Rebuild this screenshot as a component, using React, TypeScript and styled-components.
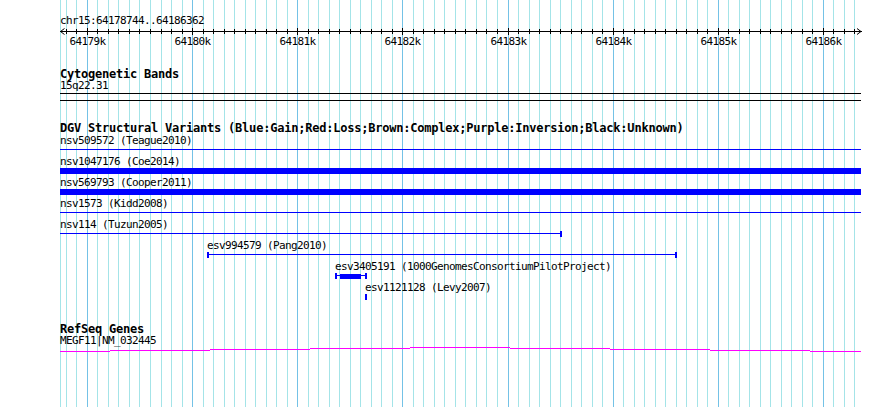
import * as React from 'react';
import styled, { createGlobalStyle } from 'styled-components';

const START = 64178744;
const END = 64186362;
const LEFT = 60;
const WIDTH = 801;

const toX = (bp: number) => ((bp - START) * WIDTH) / (END - START);

const GlobalStyle = createGlobalStyle`
  html, body {
    margin: 0;
    padding: 0;
    background: #ffffff;
  }
  body {
    font-family: "DejaVu Sans Mono", "Liberation Mono", monospace;
  }
`;

const Page = styled.div`
  position: relative;
  width: 890px;
  height: 407px;
  overflow: hidden;
  background: #ffffff;
`;

const GridLayer = styled.svg`
  position: absolute;
  left: 0;
  top: 0;
  width: 890px;
  height: 407px;
`;

const Panel = styled.div`
  position: relative;
  display: flex;
  flex-direction: column;
  width: ${WIDTH}px;
  padding-left: ${LEFT}px;
`;

const Text = styled.div<{ $top?: number }>`
  height: 12px;
  line-height: 12px;
  margin-top: ${(p) => p.$top ?? 0}px;
  font-size: 11px;
  letter-spacing: -0.62px;
  color: #000;
  white-space: pre;
`;

const TrackTitle = styled.div<{ $top: number }>`
  height: 12px;
  line-height: 12px;
  margin-top: ${(p) => p.$top}px;
  font-size: 12px;
  font-weight: bold;
  letter-spacing: -0.22px;
  color: #000;
  white-space: pre;
`;

const RulerSvg = styled.svg`
  display: block;
  width: ${WIDTH + 1}px;
  height: 9px;
  margin-left: -0px;
  overflow: visible;
`;

const TickLabels = styled.div`
  position: relative;
  height: 12px;
`;

const TickLabel = styled.span`
  position: absolute;
  top: 0;
  transform: translateX(-50%);
  font-size: 11px;
  line-height: 12px;
  letter-spacing: -0.62px;
  white-space: pre;
`;

const BandBox = styled.div`
  height: 6px;
  margin-top: 1px;
  border-top: 1px solid #000;
  border-bottom: 1px solid #000;
`;

const VariantList = styled.div`
  display: flex;
  flex-direction: column;
  gap: 3px;
  margin-top: 1px;
`;

const VariantRow = styled.div`
  display: flex;
  flex-direction: column;
`;

const VariantLabel = styled.div`
  height: 12px;
  line-height: 12px;
  font-size: 11px;
  letter-spacing: -0.62px;
  white-space: pre;
`;

const Glyph = styled.div`
  position: relative;
  height: 6px;
`;

const Connector = styled.div`
  position: absolute;
  top: 2px;
  height: 1px;
  background: #0000ff;
`;

const Block = styled.div<{ $h?: number }>`
  position: absolute;
  top: ${(p) => (6 - (p.$h ?? 6)) / 2}px;
  height: ${(p) => p.$h ?? 6}px;
  background: #0000ff;
`;

const Cap = styled.div`
  position: absolute;
  top: 0;
  width: 2px;
  height: 6px;
  background: #0000ff;
`;

const GeneSvg = styled.svg`
  display: block;
  width: ${WIDTH}px;
  height: 6px;
`;

type Variant = {
  name: string;
  start: number;
  end: number;
  thickStart?: number;
  thickEnd?: number;
  point?: boolean;
};

const variants: Variant[] = [
  { name: 'nsv509572 (Teague2010)', start: 64170000, end: 64200000 },
  { name: 'nsv1047176 (Coe2014)', start: 64170000, end: 64200000, thickStart: 64170000, thickEnd: 64200000 },
  { name: 'nsv569793 (Cooper2011)', start: 64170000, end: 64200000, thickStart: 64170000, thickEnd: 64200000 },
  { name: 'nsv1573 (Kidd2008)', start: 64170000, end: 64200000 },
  { name: 'nsv114 (Tuzun2005)', start: 64170000, end: 64183509 },
  { name: 'esv994579 (Pang2010)', start: 64180142, end: 64184602 },
  { name: 'esv3405191 (1000GenomesConsortiumPilotProject)', start: 64181359, end: 64181654, thickStart: 64181407, thickEnd: 64181607 },
  { name: 'esv1121128 (Levy2007)', start: 64181645, end: 64181650, point: true },
];

const ticks: number[] = [];
for (let bp = Math.ceil(START / 100) * 100; bp <= END; bp += 100) ticks.push(bp);

const clampX = (bp: number) => Math.max(0, Math.min(WIDTH, Math.round(toX(bp))));

const VariantGlyph: React.FC<{ v: Variant }> = ({ v }) => {
  const s = clampX(v.start);
  const e = clampX(v.end);
  if (v.point) {
    return (
      <Glyph>
        <Cap style={{ left: s }} />
      </Glyph>
    );
  }
  const hasThick = v.thickStart !== undefined && v.thickEnd !== undefined;
  const fullThick = hasThick && v.thickStart! <= START && v.thickEnd! >= END;
  return (
    <Glyph>
      {!fullThick && <Connector style={{ left: s, width: e - s }} />}
      {hasThick && (
        <Block
          $h={fullThick ? 6 : 5}
          style={{ left: clampX(v.thickStart!), width: clampX(v.thickEnd!) - clampX(v.thickStart!) }}
        />
      )}
      {v.start > START && <Cap style={{ left: s }} />}
      {v.end < END && <Cap style={{ left: e - 1 }} />}
    </Glyph>
  );
};

const Grid: React.FC = () => (
  <GridLayer viewBox="0 0 890 407">
    <line x1={LEFT + 0.5} x2={LEFT + 0.5} y1={0} y2={407} stroke="#a4e4e8" strokeWidth={1} />
    {ticks.map((bp) => {
      const gx = LEFT + Math.round(toX(bp)) + 0.5;
      const major = bp % 1000 === 0;
      return (
        <line
          key={bp}
          x1={gx}
          x2={gx}
          y1={0}
          y2={407}
          stroke={major ? '#74c2e6' : '#a4e4e8'}
          strokeWidth={1}
        />
      );
    })}
  </GridLayer>
);

const Ruler: React.FC = () => (
  <RulerSvg viewBox={`0 0 ${WIDTH + 1} 9`} shapeRendering="crispEdges">
    <line x1={0} x2={WIDTH + 1} y1={4.5} y2={4.5} stroke="#000" />
    {ticks.map((bp) => {
      const tx = Math.round(toX(bp)) + 0.5;
      const major = bp % 1000 === 0;
      return <line key={bp} x1={tx} x2={tx} y1={major ? 1 : 2} y2={major ? 8 : 7} stroke="#000" />;
    })}
    <polyline points="4.5,1.5 0.5,4.5 4.5,7.5" fill="none" stroke="#000" shapeRendering="auto" />
    <polyline
      points={`${WIDTH - 4},1.5 ${WIDTH},4.5 ${WIDTH - 4},7.5`}
      fill="none"
      stroke="#000"
      shapeRendering="auto"
    />
  </RulerSvg>
);

const geneSteps: [number, number, number][] = [
  [0, 50, 4.5],
  [50, 150, 3.5],
  [150, 250, 2.5],
  [250, 350, 1.5],
  [350, 450, 0.5],
  [450, 550, 1.5],
  [550, 650, 2.5],
  [650, 750, 3.5],
  [750, 801, 4.5],
];

export default function App() {
  const majors = ticks.filter((bp) => bp % 1000 === 0);
  return (
    <>
      <GlobalStyle />
      <Page>
        <Grid />
        <Panel>
          <Text $top={15}>chr15:64178744..64186362</Text>
          <Ruler />
          <TickLabels>
            {majors.map((bp) => (
              <TickLabel key={bp} style={{ left: Math.round(toX(bp)) + 0.5 }}>
                {`${bp / 1000}k`}
              </TickLabel>
            ))}
          </TickLabels>

          <TrackTitle $top={20}>Cytogenetic Bands</TrackTitle>
          <Text>15q22.31</Text>
          <BandBox />

          <TrackTitle $top={21}>
            DGV Structural Variants (Blue:Gain;Red:Loss;Brown:Complex;Purple:Inversion;Black:Unknown)
          </TrackTitle>
          <VariantList>
            {variants.map((v) => (
              <VariantRow key={v.name}>
                <VariantLabel style={{ marginLeft: clampX(v.start) }}>{v.name}</VariantLabel>
                <VariantGlyph v={v} />
              </VariantRow>
            ))}
          </VariantList>

          <TrackTitle $top={23}>RefSeq Genes</TrackTitle>
          <Text>MEGF11|NM_032445</Text>
          <GeneSvg viewBox={`0 0 ${WIDTH} 6`} shapeRendering="crispEdges">
            {geneSteps.map(([a, b, y]) => (
              <line key={a} x1={a} x2={b} y1={y} y2={y} stroke="#ff00ff" strokeWidth={1} />
            ))}
          </GeneSvg>
        </Panel>
      </Page>
    </>
  );
}
